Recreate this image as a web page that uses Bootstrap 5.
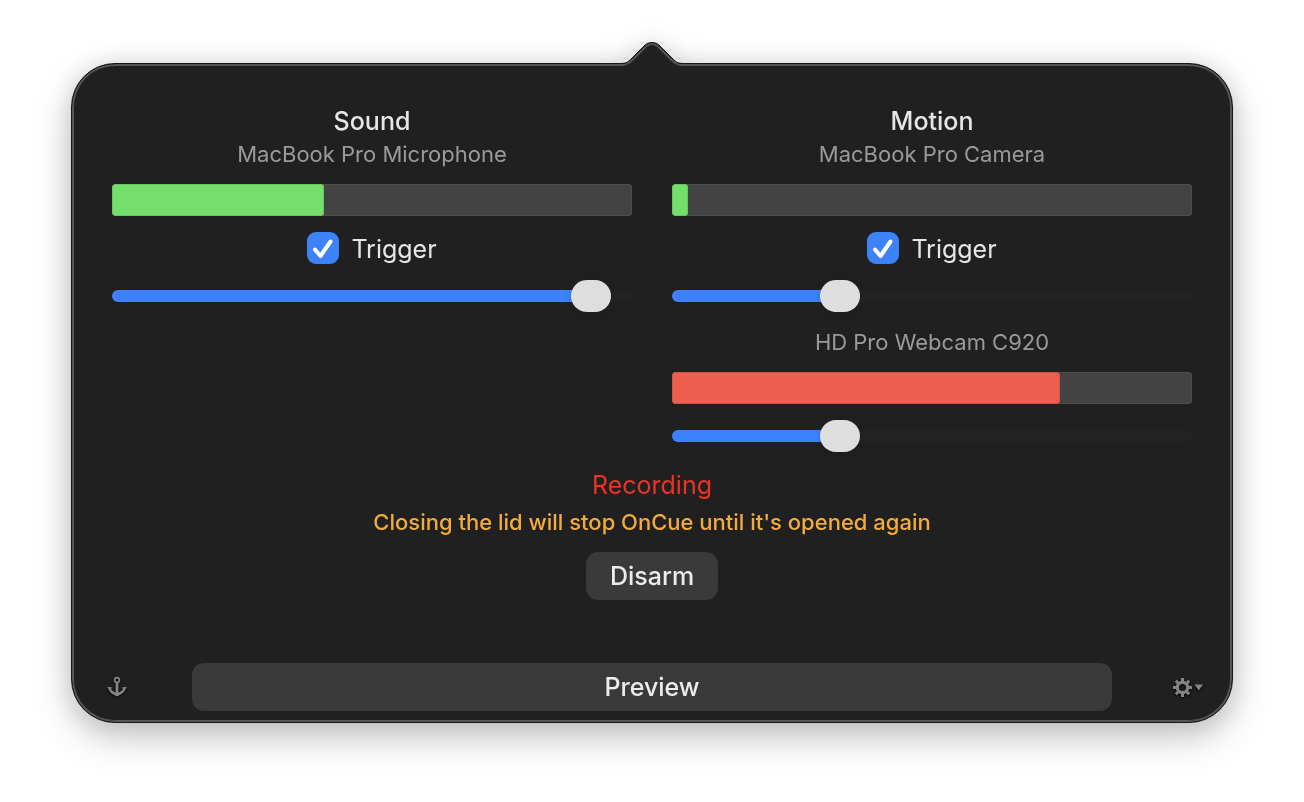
<!DOCTYPE html>
<html lang="en">
<head>
<meta charset="utf-8">
<meta name="viewport" content="width=device-width, initial-scale=1">
<title>OnCue</title>
<link href="https://cdn.jsdelivr.net/npm/bootstrap@5.3.0/dist/css/bootstrap.min.css" rel="stylesheet">
<style>
  body { background: #fff; font-family: Inter, "Liberation Sans", sans-serif; color: #e6e6e6; }
  .popover-stage { padding: 63px 71px 64px; }
  .panel { background: #202020; border: 1px solid #161616; border-radius: 44px; box-shadow: inset 0 0 0 2px #555; padding: 40px 0 11px; }
  .panel-wrap { filter: drop-shadow(0 14px 18px rgba(0,0,0,.22)) drop-shadow(0 0 12px rgba(0,0,0,.1)); }
  .panel-arrow { top: -23px; width: 68px; height: 28px; }
  .panel-body { padding: 0 40px; }
  .title-text { font-size: 25px; line-height: 34px; font-weight: 500; margin: 0 0 -2px; }
  .sub-text { font-size: 22px; line-height: 28px; margin: 0; }
  .device { color: #9a9a9a; }
  .level { height: 32px; border-radius: 4px; background: #434343; box-shadow: inset 0 0 0 1px #4c4c4c; }
  .level .progress-bar { border-radius: 4px; transition: none; }
  .level-ok { background: #74e06b; box-shadow: inset 0 0 0 1px #68c860; }
  .level-hot { background: #ed5e4e; box-shadow: inset 0 0 0 1px #d45548; }
  .trigger { height: 32px; font-size: 25px; }
  .trigger label { line-height: 32px; padding-top: 2px; }
  .trigger .form-check-input { width: 32px; height: 32px; margin: 0; float: none; border: 0; border-radius: 9px; background-color: #4a4a4a; }
  .trigger .form-check-input:checked { background-color: #3c82f9; background-size: 32px; background-image: url("data:image/svg+xml,%3Csvg xmlns='http://www.w3.org/2000/svg' viewBox='0 0 32 32'%3E%3Cpath d='M8 17.5 13.5 24 23.5 9.5' fill='none' stroke='%23fff' stroke-width='4' stroke-linecap='round' stroke-linejoin='round'/%3E%3C/svg%3E"); }
  .slider { appearance: none; -webkit-appearance: none; display: block; width: 100%; height: 32px; margin: 0; background: none; }
  .slider::-webkit-slider-runnable-track { height: 12px; border-radius: 6px; background: linear-gradient(to right, #3c82ff calc(20px + (100% - 40px) * var(--value)), #232323 0); }
  .slider::-webkit-slider-thumb { -webkit-appearance: none; width: 40px; height: 32px; margin-top: -10px; border-radius: 16px; background: #dedede; box-shadow: 0 1px 8px rgba(0,0,0,.15); }
  .recording { color: #eb3323; font-weight: 400; }
  .notice { color: #f2ab3c; font-weight: 500; }
  .btn-dim { --bs-btn-color: #ececec; --bs-btn-bg: #3a3a3a; --bs-btn-hover-color: #fff; --bs-btn-hover-bg: #444; --bs-btn-active-color: #fff; --bs-btn-active-bg: #4c4c4c; --bs-btn-border-width: 0; --bs-btn-border-radius: 12px; --bs-btn-padding-y: 0; --bs-btn-padding-x: 24px; --bs-btn-font-size: 25px; --bs-btn-font-weight: 500; height: 48px; padding-top: 2px; }
  .panel-footer { margin-top: 63px; }
  .footer-side { width: 120px; }
  .icon-btn { line-height: 0; filter: drop-shadow(0 1px 1px #000); }
</style>
</head>
<body>
<main class="popover-stage">
  <div class="panel-wrap position-relative">
    <section class="panel" aria-label="OnCue controls">
      <div class="panel-body text-center">
        <div class="row row-cols-2 m-0" style="--bs-gutter-x:40px">
          <div class="col ps-0 d-flex flex-column gap-3">
            <header class="d-flex flex-column gap-1">
              <h2 class="title-text">Sound</h2>
              <p class="sub-text device">MacBook Pro Microphone</p>
            </header>
            <div class="progress level" role="progressbar" aria-label="Sound level" aria-valuenow="41" aria-valuemin="0" aria-valuemax="100">
              <div class="progress-bar level-ok" style="width:40.8%"></div>
            </div>
            <div class="trigger d-flex justify-content-center align-items-center">
              <input class="form-check-input" type="checkbox" id="soundTrigger" checked>
              <label class="ps-2 ms-1" for="soundTrigger">Trigger</label>
            </div>
            <input class="slider" type="range" min="0" max="1000" value="956" style="--value:.956" aria-label="Sound threshold">
          </div>
          <div class="col pe-0 d-flex flex-column gap-3">
            <header class="d-flex flex-column gap-1">
              <h2 class="title-text">Motion</h2>
              <p class="sub-text device">MacBook Pro Camera</p>
            </header>
            <div class="progress level" role="progressbar" aria-label="Camera motion level" aria-valuenow="3" aria-valuemin="0" aria-valuemax="100">
              <div class="progress-bar level-ok" style="width:3.1%"></div>
            </div>
            <div class="trigger d-flex justify-content-center align-items-center">
              <input class="form-check-input" type="checkbox" id="motionTrigger" checked>
              <label class="ps-2 ms-1" for="motionTrigger">Trigger</label>
            </div>
            <input class="slider" type="range" min="0" max="1000" value="308" style="--value:.308" aria-label="Camera threshold">
            <p class="sub-text device">HD Pro Webcam C920</p>
            <div class="progress level" role="progressbar" aria-label="Webcam motion level" aria-valuenow="75" aria-valuemin="0" aria-valuemax="100">
              <div class="progress-bar level-hot" style="width:74.6%"></div>
            </div>
            <input class="slider" type="range" min="0" max="1000" value="308" style="--value:.308" aria-label="Webcam threshold">
          </div>
        </div>
        <div class="d-flex flex-column align-items-center gap-2 pt-3">
          <p class="title-text recording">Recording</p>
          <p class="sub-text notice">Closing the lid will stop OnCue until it's opened again</p>
          <button type="button" class="btn btn-dim mt-2">Disarm</button>
        </div>
      </div>
      <footer class="panel-footer d-flex align-items-center">
        <div class="footer-side ps-4">
          <button type="button" class="btn icon-btn border-0 p-0 ms-2" aria-label="Pin panel">
            <svg width="24" height="24" viewBox="0 0 24 24" fill="none" stroke="#858585">
              <circle cx="13" cy="4" r="2.4" stroke-width="1.6"/>
              <path d="M13 6.5V19" stroke-width="2.8"/>
              <path d="M3.2 10.800 8.400 11.400 7 13C8.200 15.200 10.400 16.400 13 16.800 15.600 16.400 17.800 15.200 19 13L17.600 11.400 22.800 10.800 21 14.200C19.200 17.500 16.200 18.800 13 20.500 9.800 18.800 6.800 17.500 5 14.200Z" fill="#858585" stroke="none"/>
            </svg>
          </button>
        </div>
        <button type="button" class="btn btn-dim flex-grow-1">Preview</button>
        <div class="footer-side pe-4 text-end">
          <button type="button" class="btn icon-btn border-0 p-0 me-1" aria-label="Settings">
            <svg width="32" height="24" viewBox="0 0 32 24">
              <g fill="none" stroke="#858585">
                <circle cx="10.500" cy="11.500" r="5.200" stroke-width="3.200"/>
                <path d="M10.500 2V6M10.500 17V21M1 11.500H5M16 11.500H20M3.800 4.800 6.500 7.500M14.500 15.500 17.200 18.200M3.800 18.200 6.500 15.500M14.500 7.500 17.200 4.800" stroke-width="3"/>
              </g>
              <path d="M22.500 8.500H31L26.750 14.500Z" fill="#858585"/>
            </svg>
          </button>
        </div>
      </footer>
    </section>
    <svg class="panel-arrow position-absolute start-50 translate-middle-x" viewBox="0 0 68 28" fill="none" aria-hidden="true">
      <path d="M0 23.500H4C9 23.500 11 21 14 18L25 7C28 4 30 2.500 34 2.500S40 4 43 7L54 18C57 21 59 23.500 64 23.500H68V28H0Z" fill="#202020"/>
      <path d="M0 25H4C9 25 12 22.500 15 19.500L26 8.500C29 5.500 31 4 34 4S39 5.500 42 8.500L53 19.500C56 22.500 59 25 64 25H68" stroke="#555" stroke-width="2"/>
      <path d="M0 23.500H4C9 23.500 11 21 14 18L25 7C28 4 30 2.500 34 2.500S40 4 43 7L54 18C57 21 59 23.500 64 23.500H68" stroke="#161616"/>
    </svg>
  </div>
</main>
<script src="https://cdn.jsdelivr.net/npm/bootstrap@5.3.0/dist/js/bootstrap.bundle.min.js"></script>
</body>
</html>
